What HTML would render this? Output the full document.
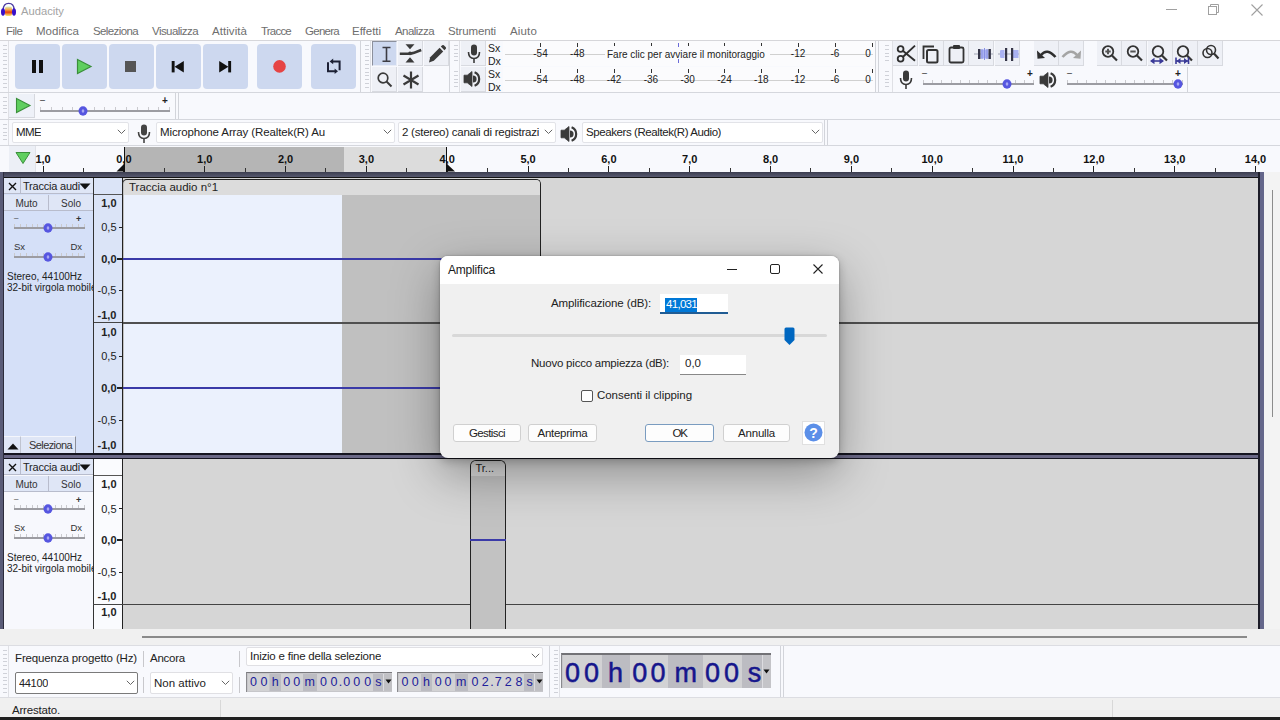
<!DOCTYPE html><html><head><meta charset="utf-8"><style>
html,body{margin:0;padding:0;width:1280px;height:720px;overflow:hidden;background:#fff}
body div{position:absolute}
.t{font-family:"Liberation Sans",sans-serif;white-space:nowrap;line-height:normal}
</style></head><body>
<div style="left:0px;top:0px;width:1280px;height:20px;background:#fff"></div>
<svg style="position:absolute;left:0px;top:0px;" width="18" height="18" viewBox="0 0 18 18"><defs><linearGradient id="ag" x1="0" y1="0" x2="0" y2="1"><stop offset="0" stop-color="#d8f0c0"></stop><stop offset="0.35" stop-color="#f8a040"></stop><stop offset="0.6" stop-color="#e84010"></stop><stop offset="1" stop-color="#f8f070"></stop></linearGradient></defs>
<path d="M3.3 9.5 Q3.3 3.3 8.7 3.3 Q14 3.3 14 9.5" fill="none" stroke="#4a3aa0" stroke-width="1.3"></path>
<rect x="5" y="6.5" width="7" height="9.5" rx="2" fill="url(#ag)"></rect>
<ellipse cx="3" cy="12" rx="2" ry="3.7" fill="#3810c8"></ellipse><ellipse cx="14" cy="12" rx="2" ry="3.7" fill="#3810c8"></ellipse></svg>
<div class="t" style="left:21px;top:5px;font-size:11.2px;color:#a3a3a3;font-weight:400;">Audacity</div>
<div style="left:1166px;top:9px;width:11px;height:1px;background:#a0a0a0"></div>
<svg style="position:absolute;left:1208px;top:4px;" width="12" height="12" viewBox="0 0 12 12"><rect x="0.5" y="2.5" width="8" height="8" fill="none" stroke="#a0a0a0"></rect><path d="M2.5 2.5 V0.5 H10.5 V8.5 H8.5" fill="none" stroke="#a0a0a0"></path></svg>
<svg style="position:absolute;left:1251px;top:4px;" width="12" height="12" viewBox="0 0 12 12"><path d="M0.5 0.5 L11.5 11.5 M11.5 0.5 L0.5 11.5" stroke="#a0a0a0" stroke-width="1.1"></path></svg>
<div style="left:0px;top:20px;width:1280px;height:20px;background:#fff"></div>
<div class="t" style="left: 6px; top: 24.5px; font-size: 11.5px; color: rgb(110, 110, 110); letter-spacing: -0.51px;">File</div>
<div class="t" style="left: 36px; top: 24.5px; font-size: 11.5px; color: rgb(110, 110, 110); letter-spacing: 0.02px;">Modifica</div>
<div class="t" style="left: 93px; top: 24.5px; font-size: 11.5px; color: rgb(110, 110, 110); letter-spacing: -0.61px;">Seleziona</div>
<div class="t" style="left: 152px; top: 24.5px; font-size: 11.5px; color: rgb(110, 110, 110); letter-spacing: -0.56px;">Visualizza</div>
<div class="t" style="left: 212px; top: 24.5px; font-size: 11.5px; color: rgb(110, 110, 110); letter-spacing: 0.06px;">Attività</div>
<div class="t" style="left: 261px; top: 24.5px; font-size: 11.5px; color: rgb(110, 110, 110); letter-spacing: -0.79px;">Tracce</div>
<div class="t" style="left: 305px; top: 24.5px; font-size: 11.5px; color: rgb(110, 110, 110); letter-spacing: -0.73px;">Genera</div>
<div class="t" style="left: 352px; top: 24.5px; font-size: 11.5px; color: rgb(110, 110, 110); letter-spacing: -0.03px;">Effetti</div>
<div class="t" style="left: 395px; top: 24.5px; font-size: 11.5px; color: rgb(110, 110, 110); letter-spacing: -0.56px;">Analizza</div>
<div class="t" style="left: 448px; top: 24.5px; font-size: 11.5px; color: rgb(110, 110, 110); letter-spacing: -0.14px;">Strumenti</div>
<div class="t" style="left: 510px; top: 24.5px; font-size: 11.5px; color: rgb(110, 110, 110); letter-spacing: 0.16px;">Aiuto</div>
<div style="left:0px;top:40px;width:1280px;height:1px;background:#d6d6da"></div>
<div style="left:0px;top:41px;width:1280px;height:105px;background:#f8f9fd"></div>
<div style="left:0px;top:92px;width:1280px;height:1px;background:#d5d7dd"></div>
<div style="left:0px;top:119px;width:1280px;height:1px;background:#d5d7dd"></div>
<div style="left:0px;top:145px;width:1280px;height:1px;background:#d5d7dd"></div>
<div style="left:3px;top:45.0px;width:4px;height:1px;background:#cfd1d8"></div>
<div style="left:3px;top:48.8px;width:4px;height:1px;background:#cfd1d8"></div>
<div style="left:3px;top:52.6px;width:4px;height:1px;background:#cfd1d8"></div>
<div style="left:3px;top:56.4px;width:4px;height:1px;background:#cfd1d8"></div>
<div style="left:3px;top:60.2px;width:4px;height:1px;background:#cfd1d8"></div>
<div style="left:3px;top:64.0px;width:4px;height:1px;background:#cfd1d8"></div>
<div style="left:3px;top:67.8px;width:4px;height:1px;background:#cfd1d8"></div>
<div style="left:3px;top:71.6px;width:4px;height:1px;background:#cfd1d8"></div>
<div style="left:3px;top:75.4px;width:4px;height:1px;background:#cfd1d8"></div>
<div style="left:3px;top:79.2px;width:4px;height:1px;background:#cfd1d8"></div>
<div style="left:3px;top:83.0px;width:4px;height:1px;background:#cfd1d8"></div>
<div style="left:3px;top:86.8px;width:4px;height:1px;background:#cfd1d8"></div>
<div style="left:8px;top:41px;width:1px;height:51px;background:#dfe0e5"></div>
<div style="left:15px;top:44px;width:45px;height:45px;background:#cdd8ef;border-radius:4px"></div>
<div style="left:62px;top:44px;width:45px;height:45px;background:#cdd8ef;border-radius:4px"></div>
<div style="left:109px;top:44px;width:45px;height:45px;background:#cdd8ef;border-radius:4px"></div>
<div style="left:156px;top:44px;width:45px;height:45px;background:#cdd8ef;border-radius:4px"></div>
<div style="left:203px;top:44px;width:45px;height:45px;background:#cdd8ef;border-radius:4px"></div>
<div style="left:257px;top:44px;width:45px;height:45px;background:#cdd8ef;border-radius:4px"></div>
<div style="left:311px;top:44px;width:45px;height:45px;background:#cdd8ef;border-radius:4px"></div>
<div style="left:32px;top:60px;width:3.5px;height:13px;background:#111"></div>
<div style="left:39px;top:60px;width:4px;height:13px;background:#111"></div>
<svg style="position:absolute;left:76px;top:58px;" width="17" height="17" viewBox="0 0 17 17"><path d="M1.5 1.5 L15 8.5 L1.5 15.5 Z" fill="#5fcf5f" stroke="#3a8f3a" stroke-width="1.2"></path></svg>
<div style="left:125px;top:61px;width:11px;height:11px;background:#555"></div>
<svg style="position:absolute;left:171px;top:60px;" width="14" height="14" viewBox="0 0 14 14"><rect x="0.7" y="1" width="2.9" height="11.4" fill="#111"></rect><path d="M12.8 1 L3.6 6.7 L12.8 12.4 Z" fill="#111"></path></svg>
<svg style="position:absolute;left:218px;top:60px;" width="14" height="14" viewBox="0 0 14 14"><rect x="10.2" y="1" width="2.9" height="11.4" fill="#111"></rect><path d="M1.2 1 L10.4 6.7 L1.2 12.4 Z" fill="#111"></path></svg>
<svg style="position:absolute;left:272px;top:59px;" width="15" height="15" viewBox="0 0 15 15"><circle cx="7.5" cy="7.4" r="6.3" fill="#e64444"></circle></svg>
<svg style="position:absolute;left:326px;top:57px;" width="16" height="18" viewBox="0 0 16 18"><path d="M6 4.4 H13.6 V13.3" stroke="#1c2034" stroke-width="2" fill="none"></path><path d="M3.6 4.4 L7.2 1.6 V7.2 Z" fill="#1c2034"></path><path d="M2 5.2 V14.2 H9.5" stroke="#1c2034" stroke-width="2" fill="none"></path><path d="M12 14.2 L8.6 11.4 V17 Z" fill="#1c2034"></path></svg>
<div style="left:360px;top:41px;width:1px;height:51px;background:#d2d4da"></div>
<div style="left:365px;top:45.0px;width:4px;height:1px;background:#cfd1d8"></div>
<div style="left:365px;top:48.8px;width:4px;height:1px;background:#cfd1d8"></div>
<div style="left:365px;top:52.6px;width:4px;height:1px;background:#cfd1d8"></div>
<div style="left:365px;top:56.4px;width:4px;height:1px;background:#cfd1d8"></div>
<div style="left:365px;top:60.2px;width:4px;height:1px;background:#cfd1d8"></div>
<div style="left:365px;top:64.0px;width:4px;height:1px;background:#cfd1d8"></div>
<div style="left:365px;top:67.8px;width:4px;height:1px;background:#cfd1d8"></div>
<div style="left:365px;top:71.6px;width:4px;height:1px;background:#cfd1d8"></div>
<div style="left:365px;top:75.4px;width:4px;height:1px;background:#cfd1d8"></div>
<div style="left:365px;top:79.2px;width:4px;height:1px;background:#cfd1d8"></div>
<div style="left:365px;top:83.0px;width:4px;height:1px;background:#cfd1d8"></div>
<div style="left:365px;top:86.8px;width:4px;height:1px;background:#cfd1d8"></div>
<div style="left:370px;top:41px;width:1px;height:51px;background:#dfe0e5"></div>
<div style="left:372px;top:41px;width:25px;height:25px;background:#eef0f6;border-right:1px solid #d8dae0;border-bottom:1px solid #d8dae0;box-sizing:border-box"></div>
<div style="left:398px;top:41px;width:25px;height:25px;background:#eef0f6;border-right:1px solid #d8dae0;border-bottom:1px solid #d8dae0;box-sizing:border-box"></div>
<div style="left:424px;top:41px;width:25px;height:25px;background:#eef0f6;border-right:1px solid #d8dae0;border-bottom:1px solid #d8dae0;box-sizing:border-box"></div>
<div style="left:372px;top:67px;width:25px;height:25px;background:#eef0f6;border-right:1px solid #d8dae0;border-bottom:1px solid #d8dae0;box-sizing:border-box"></div>
<div style="left:398px;top:67px;width:25px;height:25px;background:#eef0f6;border-right:1px solid #d8dae0;border-bottom:1px solid #d8dae0;box-sizing:border-box"></div>
<div style="left:372px;top:41px;width:25px;height:25px;background:#cdd8ef;border-left:1px solid #8c909c;border-top:1px solid #8c909c;border-right:1px solid #e8ecf6;border-bottom:1px solid #e8ecf6;box-sizing:border-box"></div>
<svg style="position:absolute;left:381px;top:46px;" width="11" height="17" viewBox="0 0 11 17"><path d="M1.5 1.5 H9.5 M1.5 15.2 H9.5 M5.5 1.5 V15.2" stroke="#3c3c44" stroke-width="1.6" fill="none"></path></svg>
<svg style="position:absolute;left:399px;top:43px;" width="23" height="21" viewBox="0 0 23 21"><path d="M6.5 1.2 H15.5 L11 6.2 Z" fill="#3a3a3a"></path><path d="M6.5 19.5 H15.5 L11 14.2 Z" fill="#3a3a3a"></path><path d="M0.8 10.8 H10.5 Q14 10.5 22.2 7" stroke="#3a3a3a" stroke-width="2.6" fill="none"></path><circle cx="11" cy="10.4" r="1.8" fill="#3a3a3a"></circle></svg>
<svg style="position:absolute;left:427px;top:44px;" width="20" height="20" viewBox="0 0 20 20"><path d="M2 18.5 L3.2 13.2 L12.6 3.8 L16.2 7.4 L6.8 16.8 Z" fill="#3a3a3a"></path><path d="M13.8 2.6 L15.2 1.2 Q16 0.6 16.8 1.2 L18.8 3.2 Q19.4 4 18.8 4.8 L17.4 6.2 Z" fill="#3a3a3a"></path></svg>
<svg style="position:absolute;left:376px;top:71px;" width="18" height="18" viewBox="0 0 18 18"><circle cx="7" cy="7" r="4.8" stroke="#3a3a3a" stroke-width="1.7" fill="none"></circle><path d="M10.5 10.5 L15.5 15.5" stroke="#3a3a3a" stroke-width="2"></path></svg>
<svg style="position:absolute;left:401px;top:70px;" width="20" height="20" viewBox="0 0 20 20"><path d="M10 1.5 V18.5 M2.5 5.5 L17.5 14.5 M2.5 14.5 L17.5 5.5" stroke="#3a3a3a" stroke-width="2.2"></path></svg>
<div style="left:449px;top:41px;width:1px;height:51px;background:#d2d4da"></div>
<div style="left:454px;top:45.0px;width:4px;height:1px;background:#cfd1d8"></div>
<div style="left:454px;top:48.8px;width:4px;height:1px;background:#cfd1d8"></div>
<div style="left:454px;top:52.6px;width:4px;height:1px;background:#cfd1d8"></div>
<div style="left:454px;top:56.4px;width:4px;height:1px;background:#cfd1d8"></div>
<div style="left:454px;top:60.2px;width:4px;height:1px;background:#cfd1d8"></div>
<div style="left:454px;top:71.0px;width:4px;height:1px;background:#cfd1d8"></div>
<div style="left:454px;top:74.8px;width:4px;height:1px;background:#cfd1d8"></div>
<div style="left:454px;top:78.6px;width:4px;height:1px;background:#cfd1d8"></div>
<div style="left:454px;top:82.4px;width:4px;height:1px;background:#cfd1d8"></div>
<div style="left:454px;top:86.2px;width:4px;height:1px;background:#cfd1d8"></div>
<div style="left:459px;top:41px;width:1px;height:51px;background:#dfe0e5"></div>
<div style="left:461px;top:41px;width:25px;height:25px;background:#eef0f6;border-right:1px solid #d8dae0;border-bottom:1px solid #d8dae0;box-sizing:border-box"></div>
<div style="left:461px;top:67px;width:25px;height:25px;background:#eef0f6;border-right:1px solid #d8dae0;border-bottom:1px solid #d8dae0;box-sizing:border-box"></div>
<svg style="position:absolute;left:467px;top:44px;" width="14" height="20" viewBox="0 0 14 20"><rect x="4" y="0.5" width="6" height="11" rx="3" fill="#3a3a3a"></rect><path d="M1.5 8 Q1.5 14.5 7 14.5 Q12.5 14.5 12.5 8" stroke="#3a3a3a" stroke-width="1.6" fill="none"></path><path d="M7 14.5 V19" stroke="#3a3a3a" stroke-width="1.6"></path></svg>
<svg style="position:absolute;left:463px;top:70px;" width="20" height="18" viewBox="0 0 20 18"><path d="M1 5.2 H4.3 L9 1.5 V16.5 L4.3 12.8 H1 Z" fill="#3a3a3a" stroke="#3a3a3a" stroke-width="0.8" stroke-linejoin="round"></path><path d="M10 5.4 A3.6 3.6 0 0 1 10 12.6 Z" fill="#3a3a3a"></path><path d="M11.6 2.3 A7.2 7.2 0 0 1 11.6 15.7" stroke="#3a3a3a" stroke-width="2.2" fill="none"></path></svg>
<div class="t" style="left:488px;top:42px;font-size:10.5px;color:#222;font-weight:400;">Sx</div>
<div class="t" style="left:488px;top:54.5px;font-size:10.5px;color:#222;font-weight:400;">Dx</div>
<div class="t" style="left:488px;top:68px;font-size:10.5px;color:#222;font-weight:400;">Sx</div>
<div class="t" style="left:488px;top:80.5px;font-size:10.5px;color:#222;font-weight:400;">Dx</div>
<div style="left:503px;top:41px;width:372px;height:25px;background:#fbfbfd"></div>
<div style="left:505px;top:54px;width:368px;height:1px;background:#d0d0d0"></div>
<div style="left:540px;top:43px;width:1px;height:4px;background:#333"></div>
<div style="left:577px;top:43px;width:1px;height:4px;background:#333"></div>
<div style="left:614px;top:43px;width:1px;height:4px;background:#333"></div>
<div style="left:651px;top:43px;width:1px;height:4px;background:#333"></div>
<div style="left:688px;top:43px;width:1px;height:4px;background:#333"></div>
<div style="left:724px;top:43px;width:1px;height:4px;background:#333"></div>
<div style="left:761px;top:43px;width:1px;height:4px;background:#333"></div>
<div style="left:798px;top:43px;width:1px;height:4px;background:#333"></div>
<div style="left:835px;top:43px;width:1px;height:4px;background:#333"></div>
<div style="left:872px;top:43px;width:1px;height:4px;background:#333"></div>
<div class="t" style="left:520.5px;top:47.5px;width:40px;text-align:center;font-size:10px;color:#222">-54</div>
<div class="t" style="left:557.3px;top:47.5px;width:40px;text-align:center;font-size:10px;color:#222">-48</div>
<div class="t" style="left:778.0999999999999px;top:47.5px;width:40px;text-align:center;font-size:10px;color:#222">-12</div>
<div class="t" style="left:814.9px;top:47.5px;width:40px;text-align:center;font-size:10px;color:#222">-6</div>
<div class="t" style="left:845.7px;top:47.5px;width:25px;text-align:right;font-size:10px;color:#222">0</div>
<div style="left:503px;top:67px;width:372px;height:25px;background:#fbfbfd"></div>
<div style="left:505px;top:80px;width:368px;height:1px;background:#d0d0d0"></div>
<div style="left:540px;top:69px;width:1px;height:4px;background:#333"></div>
<div style="left:577px;top:69px;width:1px;height:4px;background:#333"></div>
<div style="left:614px;top:69px;width:1px;height:4px;background:#333"></div>
<div style="left:651px;top:69px;width:1px;height:4px;background:#333"></div>
<div style="left:688px;top:69px;width:1px;height:4px;background:#333"></div>
<div style="left:724px;top:69px;width:1px;height:4px;background:#333"></div>
<div style="left:761px;top:69px;width:1px;height:4px;background:#333"></div>
<div style="left:798px;top:69px;width:1px;height:4px;background:#333"></div>
<div style="left:835px;top:69px;width:1px;height:4px;background:#333"></div>
<div style="left:872px;top:69px;width:1px;height:4px;background:#333"></div>
<div class="t" style="left:520.5px;top:73.5px;width:40px;text-align:center;font-size:10px;color:#222">-54</div>
<div class="t" style="left:557.3px;top:73.5px;width:40px;text-align:center;font-size:10px;color:#222">-48</div>
<div class="t" style="left:594.1px;top:73.5px;width:40px;text-align:center;font-size:10px;color:#222">-42</div>
<div class="t" style="left:630.9px;top:73.5px;width:40px;text-align:center;font-size:10px;color:#222">-36</div>
<div class="t" style="left:667.7px;top:73.5px;width:40px;text-align:center;font-size:10px;color:#222">-30</div>
<div class="t" style="left:704.5px;top:73.5px;width:40px;text-align:center;font-size:10px;color:#222">-24</div>
<div class="t" style="left:741.3px;top:73.5px;width:40px;text-align:center;font-size:10px;color:#222">-18</div>
<div class="t" style="left:778.0999999999999px;top:73.5px;width:40px;text-align:center;font-size:10px;color:#222">-12</div>
<div class="t" style="left:814.9px;top:73.5px;width:40px;text-align:center;font-size:10px;color:#222">-6</div>
<div class="t" style="left:845.7px;top:73.5px;width:25px;text-align:right;font-size:10px;color:#222">0</div>
<div style="left:605px;top:46px;width:165px;height:16px;background:#fbfbfd"></div>
<div class="t" style="left:607px;top:49px;font-size:10px;color:#222;font-weight:400;">Fare clic per avviare il monitoraggio</div>
<div style="left:678px;top:43px;width:1px;height:4px;background:#6a6ad8"></div>
<div style="left:678px;top:59px;width:1px;height:4px;background:#6a6ad8"></div>
<div style="left:875px;top:41px;width:1px;height:51px;background:#d2d4da"></div>
<div style="left:878px;top:41px;width:1px;height:51px;background:#d2d4da"></div>
<div style="left:885px;top:45.0px;width:4px;height:1px;background:#cfd1d8"></div>
<div style="left:885px;top:48.8px;width:4px;height:1px;background:#cfd1d8"></div>
<div style="left:885px;top:52.6px;width:4px;height:1px;background:#cfd1d8"></div>
<div style="left:885px;top:56.4px;width:4px;height:1px;background:#cfd1d8"></div>
<div style="left:885px;top:60.2px;width:4px;height:1px;background:#cfd1d8"></div>
<div style="left:885px;top:71.0px;width:4px;height:1px;background:#cfd1d8"></div>
<div style="left:885px;top:74.8px;width:4px;height:1px;background:#cfd1d8"></div>
<div style="left:885px;top:78.6px;width:4px;height:1px;background:#cfd1d8"></div>
<div style="left:885px;top:82.4px;width:4px;height:1px;background:#cfd1d8"></div>
<div style="left:885px;top:86.2px;width:4px;height:1px;background:#cfd1d8"></div>
<div style="left:892px;top:41px;width:1px;height:51px;background:#dfe0e5"></div>
<div style="left:893px;top:41px;width:25px;height:25px;background:#eef0f6;border-right:1px solid #d8dae0;border-bottom:1px solid #d8dae0;box-sizing:border-box"></div>
<div style="left:919px;top:41px;width:25px;height:25px;background:#eef0f6;border-right:1px solid #d8dae0;border-bottom:1px solid #d8dae0;box-sizing:border-box"></div>
<div style="left:944px;top:41px;width:25px;height:25px;background:#eef0f6;border-right:1px solid #d8dae0;border-bottom:1px solid #d8dae0;box-sizing:border-box"></div>
<div style="left:969px;top:41px;width:25px;height:25px;background:#eef0f6;border-right:1px solid #d8dae0;border-bottom:1px solid #d8dae0;box-sizing:border-box"></div>
<div style="left:995px;top:41px;width:25px;height:25px;background:#eef0f6;border-right:1px solid #d8dae0;border-bottom:1px solid #d8dae0;box-sizing:border-box"></div>
<div style="left:1034px;top:41px;width:25px;height:25px;background:#eef0f6;border-right:1px solid #d8dae0;border-bottom:1px solid #d8dae0;box-sizing:border-box"></div>
<div style="left:1059px;top:41px;width:25px;height:25px;background:#eef0f6;border-right:1px solid #d8dae0;border-bottom:1px solid #d8dae0;box-sizing:border-box"></div>
<div style="left:1097px;top:41px;width:25px;height:25px;background:#eef0f6;border-right:1px solid #d8dae0;border-bottom:1px solid #d8dae0;box-sizing:border-box"></div>
<div style="left:1122px;top:41px;width:25px;height:25px;background:#eef0f6;border-right:1px solid #d8dae0;border-bottom:1px solid #d8dae0;box-sizing:border-box"></div>
<div style="left:1148px;top:41px;width:25px;height:25px;background:#eef0f6;border-right:1px solid #d8dae0;border-bottom:1px solid #d8dae0;box-sizing:border-box"></div>
<div style="left:1173px;top:41px;width:25px;height:25px;background:#eef0f6;border-right:1px solid #d8dae0;border-bottom:1px solid #d8dae0;box-sizing:border-box"></div>
<div style="left:1198px;top:41px;width:25px;height:25px;background:#eef0f6;border-right:1px solid #d8dae0;border-bottom:1px solid #d8dae0;box-sizing:border-box"></div>
<svg style="position:absolute;left:895px;top:42px;" width="22" height="22" viewBox="0 0 22 22"><circle cx="5.6" cy="7" r="2.9" stroke="#2e2e2e" stroke-width="1.8" fill="none"></circle><circle cx="5.6" cy="16.8" r="2.9" stroke="#2e2e2e" stroke-width="1.8" fill="none"></circle><path d="M7.8 8.8 L20 18.8 M7.8 15 L20 3.6" stroke="#2e2e2e" stroke-width="1.9"></path></svg>
<svg style="position:absolute;left:921px;top:44px;" width="20" height="20" viewBox="0 0 20 20"><path d="M2.5 15 V2.5 H13" stroke="#333" stroke-width="1.8" fill="none"></path><rect x="6" y="6" width="10.5" height="12.5" rx="1.5" stroke="#333" stroke-width="2" fill="none"></rect></svg>
<svg style="position:absolute;left:948px;top:44px;" width="17" height="20" viewBox="0 0 17 20"><rect x="1.5" y="3.5" width="14" height="15" rx="1.5" stroke="#333" stroke-width="1.8" fill="none"></rect><rect x="5" y="1" width="7" height="4" rx="1" fill="#333"></rect></svg>
<svg style="position:absolute;left:971px;top:44px;" width="24" height="20" viewBox="0 0 24 20"><path d="M3 10 H22" stroke="#a0a4b4" stroke-width="1"></path><rect x="9.5" y="5.5" width="8" height="9" fill="#aab2f2"></rect><path d="M11 5 V15 M13.5 4 V16 M16 5 V15" stroke="#8890e4" stroke-width="1"></path><rect x="7" y="5" width="2.4" height="10" fill="#353548"></rect><rect x="17.5" y="5" width="2.4" height="10" fill="#353548"></rect></svg>
<svg style="position:absolute;left:996px;top:44px;" width="24" height="20" viewBox="0 0 24 20"><path d="M2 10 H23" stroke="#a0a4b4" stroke-width="1"></path><path d="M4 6 Q8 10 4 14 Z" fill="#aab2f2"></path><rect x="4.5" y="6" width="4" height="8" fill="#aab2f2"></rect><rect x="17" y="6" width="5.5" height="8" fill="#aab2f2"></rect><rect x="9" y="4" width="2.2" height="13" fill="#353548"></rect><rect x="15" y="4" width="2.2" height="13" fill="#353548"></rect></svg>
<svg style="position:absolute;left:1036px;top:47px;" width="22" height="14" viewBox="0 0 22 14"><path d="M5 8 Q11 0.5 19.5 10" stroke="#2e2e2e" stroke-width="2.6" fill="none"></path><path d="M1 3.5 L1.5 11.8 L9 11 Z" fill="#2e2e2e"></path></svg>
<svg style="position:absolute;left:1060px;top:47px;" width="22" height="14" viewBox="0 0 22 14"><path d="M17 8 Q11 0.5 2.5 10" stroke="#a4a4a4" stroke-width="2.6" fill="none"></path><path d="M21 3.5 L20.5 11.8 L13 11 Z" fill="#a4a4a4"></path></svg>
<svg style="position:absolute;left:1100px;top:44px;" width="20" height="20" viewBox="0 0 20 20"><circle cx="8" cy="7.5" r="5.3" stroke="#333" stroke-width="1.8" fill="none"></circle><path d="M12 11.5 L17 16.5" stroke="#333" stroke-width="2.2"></path><path d="M5.3 7.5 H10.7 M8 4.8 V10.2" stroke="#555" stroke-width="2"></path></svg>
<svg style="position:absolute;left:1125px;top:44px;" width="20" height="20" viewBox="0 0 20 20"><circle cx="8" cy="7.5" r="5.3" stroke="#333" stroke-width="1.8" fill="none"></circle><path d="M12 11.5 L17 16.5" stroke="#333" stroke-width="2.2"></path><path d="M5.3 7.5 H10.7" stroke="#555" stroke-width="2"></path></svg>
<svg style="position:absolute;left:1150px;top:44px;" width="20" height="20" viewBox="0 0 20 20"><circle cx="8" cy="7.5" r="5.3" stroke="#333" stroke-width="1.8" fill="none"></circle><path d="M12 11.5 L17 16.5" stroke="#333" stroke-width="2.2"></path><path d="M1.5 17 H12.5" stroke="#3a3a98" stroke-width="1.6"></path><path d="M0 17 L4.5 13.8 V20.2 Z M14 17 L9.5 13.8 V20.2 Z" fill="#3a3a98"></path></svg>
<svg style="position:absolute;left:1175px;top:44px;" width="20" height="20" viewBox="0 0 20 20"><circle cx="8" cy="7.5" r="5.3" stroke="#333" stroke-width="1.8" fill="none"></circle><path d="M12 11.5 L17 16.5" stroke="#333" stroke-width="2.2"></path><path d="M1 17 H13 M1 13.5 V20.5 M13.5 13.5 V20.5" stroke="#3a3a98" stroke-width="1.6"></path><path d="M1.5 17 L5.5 14 V20 Z M13 17 L9 14 V20 Z" fill="#3a3a98"></path></svg>
<svg style="position:absolute;left:1201px;top:44px;" width="20" height="20" viewBox="0 0 20 20"><circle cx="6.5" cy="9" r="4.5" stroke="#333" stroke-width="1.6" fill="none"></circle><circle cx="10" cy="6" r="4.5" stroke="#333" stroke-width="1.6" fill="none"></circle><path d="M13 9.5 L17.5 14.5" stroke="#333" stroke-width="2.2"></path></svg>
<svg style="position:absolute;left:899px;top:70px;" width="14" height="20" viewBox="0 0 14 20"><rect x="4" y="0.5" width="6" height="11" rx="3" fill="#3a3a3a"></rect><path d="M1.5 8 Q1.5 14.5 7 14.5 Q12.5 14.5 12.5 8" stroke="#3a3a3a" stroke-width="1.6" fill="none"></path><path d="M7 14.5 V19" stroke="#3a3a3a" stroke-width="1.6"></path></svg>
<div style="left:923px;top:83px;width:111px;height:1.5px;background:#9c9ca2"></div>
<div style="left:923px;top:80px;width:1px;height:3px;background:#cacace"></div>
<div style="left:932px;top:80px;width:1px;height:3px;background:#cacace"></div>
<div style="left:941px;top:80px;width:1px;height:3px;background:#cacace"></div>
<div style="left:951px;top:80px;width:1px;height:3px;background:#cacace"></div>
<div style="left:960px;top:80px;width:1px;height:3px;background:#cacace"></div>
<div style="left:969px;top:80px;width:1px;height:3px;background:#cacace"></div>
<div style="left:978px;top:80px;width:1px;height:3px;background:#cacace"></div>
<div style="left:987px;top:80px;width:1px;height:3px;background:#cacace"></div>
<div style="left:996px;top:80px;width:1px;height:3px;background:#cacace"></div>
<div style="left:1005px;top:80px;width:1px;height:3px;background:#cacace"></div>
<div style="left:1015px;top:80px;width:1px;height:3px;background:#cacace"></div>
<div style="left:1024px;top:80px;width:1px;height:3px;background:#cacace"></div>
<div style="left:1033px;top:80px;width:1px;height:3px;background:#cacace"></div>
<svg style="position:absolute;left:1002px;top:78.75px;" width="10" height="10" viewBox="0 0 10 10"><ellipse cx="5" cy="5" rx="4.5" ry="4.7" fill="#5656e0"></ellipse><ellipse cx="5" cy="5" rx="1.3" ry="1.8" fill="#a8a8f4"></ellipse></svg>
<div class="t" style="left:922px;top:68px;font-size:9px;color:#222;font-weight:400;">–</div>
<div class="t" style="left:1027px;top:68px;font-size:10px;color:#222;font-weight:700;">+</div>
<svg style="position:absolute;left:1039px;top:71px;" width="20" height="18" viewBox="0 0 20 18"><path d="M1 5.2 H4.3 L9 1.5 V16.5 L4.3 12.8 H1 Z" fill="#3a3a3a" stroke="#3a3a3a" stroke-width="0.8" stroke-linejoin="round"></path><path d="M10 5.4 A3.6 3.6 0 0 1 10 12.6 Z" fill="#3a3a3a"></path><path d="M11.6 2.3 A7.2 7.2 0 0 1 11.6 15.7" stroke="#3a3a3a" stroke-width="2.2" fill="none"></path></svg>
<div style="left:1067px;top:83px;width:116px;height:1.5px;background:#9c9ca2"></div>
<div style="left:1067px;top:80px;width:1px;height:3px;background:#cacace"></div>
<div style="left:1077px;top:80px;width:1px;height:3px;background:#cacace"></div>
<div style="left:1086px;top:80px;width:1px;height:3px;background:#cacace"></div>
<div style="left:1096px;top:80px;width:1px;height:3px;background:#cacace"></div>
<div style="left:1105px;top:80px;width:1px;height:3px;background:#cacace"></div>
<div style="left:1115px;top:80px;width:1px;height:3px;background:#cacace"></div>
<div style="left:1125px;top:80px;width:1px;height:3px;background:#cacace"></div>
<div style="left:1134px;top:80px;width:1px;height:3px;background:#cacace"></div>
<div style="left:1144px;top:80px;width:1px;height:3px;background:#cacace"></div>
<div style="left:1153px;top:80px;width:1px;height:3px;background:#cacace"></div>
<div style="left:1163px;top:80px;width:1px;height:3px;background:#cacace"></div>
<div style="left:1172px;top:80px;width:1px;height:3px;background:#cacace"></div>
<div style="left:1182px;top:80px;width:1px;height:3px;background:#cacace"></div>
<svg style="position:absolute;left:1173px;top:78.75px;" width="10" height="10" viewBox="0 0 10 10"><ellipse cx="5" cy="5" rx="4.5" ry="4.7" fill="#5656e0"></ellipse><ellipse cx="5" cy="5" rx="1.3" ry="1.8" fill="#a8a8f4"></ellipse></svg>
<div class="t" style="left:1067px;top:68px;font-size:9px;color:#222;font-weight:400;">–</div>
<div class="t" style="left:1175px;top:68px;font-size:10px;color:#222;font-weight:700;">+</div>
<div style="left:1187px;top:67px;width:1px;height:25px;background:#d2d4da"></div>
<div style="left:3px;top:97.0px;width:4px;height:1px;background:#cfd1d8"></div>
<div style="left:3px;top:100.8px;width:4px;height:1px;background:#cfd1d8"></div>
<div style="left:3px;top:104.6px;width:4px;height:1px;background:#cfd1d8"></div>
<div style="left:3px;top:108.4px;width:4px;height:1px;background:#cfd1d8"></div>
<div style="left:3px;top:112.2px;width:4px;height:1px;background:#cfd1d8"></div>
<div style="left:8px;top:93px;width:1px;height:26px;background:#dfe0e5"></div>
<div style="left:9px;top:94px;width:26px;height:24px;background:#eef1f8;border-right:1px solid #d6d8de;border-bottom:1px solid #d6d8de;box-sizing:border-box"></div>
<svg style="position:absolute;left:15px;top:97px;" width="17" height="17" viewBox="0 0 17 17"><path d="M1.5 1.5 L15 8.5 L1.5 15.5 Z" fill="#5fcf5f" stroke="#3a8f3a" stroke-width="1.1"></path></svg>
<div class="t" style="left:40px;top:95px;font-size:9px;color:#222;font-weight:400;">–</div>
<div class="t" style="left:162px;top:95px;font-size:10px;color:#222;font-weight:700;">+</div>
<div style="left:40px;top:110px;width:130px;height:1.5px;background:#9c9ca2"></div>
<div style="left:40px;top:107px;width:1px;height:3px;background:#cacace"></div>
<div style="left:51px;top:107px;width:1px;height:3px;background:#cacace"></div>
<div style="left:62px;top:107px;width:1px;height:3px;background:#cacace"></div>
<div style="left:72px;top:107px;width:1px;height:3px;background:#cacace"></div>
<div style="left:83px;top:107px;width:1px;height:3px;background:#cacace"></div>
<div style="left:94px;top:107px;width:1px;height:3px;background:#cacace"></div>
<div style="left:104px;top:107px;width:1px;height:3px;background:#cacace"></div>
<div style="left:115px;top:107px;width:1px;height:3px;background:#cacace"></div>
<div style="left:126px;top:107px;width:1px;height:3px;background:#cacace"></div>
<div style="left:137px;top:107px;width:1px;height:3px;background:#cacace"></div>
<div style="left:148px;top:107px;width:1px;height:3px;background:#cacace"></div>
<div style="left:158px;top:107px;width:1px;height:3px;background:#cacace"></div>
<div style="left:169px;top:107px;width:1px;height:3px;background:#cacace"></div>
<svg style="position:absolute;left:78px;top:105.75px;" width="10" height="10" viewBox="0 0 10 10"><ellipse cx="5" cy="5" rx="4.5" ry="4.7" fill="#5656e0"></ellipse><ellipse cx="5" cy="5" rx="1.3" ry="1.8" fill="#a8a8f4"></ellipse></svg>
<div style="left:175px;top:93px;width:1px;height:26px;background:#d2d4da"></div>
<div style="left:178px;top:93px;width:1px;height:26px;background:#d2d4da"></div>
<div style="left:3px;top:124.0px;width:4px;height:1px;background:#cfd1d8"></div>
<div style="left:3px;top:127.8px;width:4px;height:1px;background:#cfd1d8"></div>
<div style="left:3px;top:131.6px;width:4px;height:1px;background:#cfd1d8"></div>
<div style="left:3px;top:135.4px;width:4px;height:1px;background:#cfd1d8"></div>
<div style="left:3px;top:139.2px;width:4px;height:1px;background:#cfd1d8"></div>
<div style="left:8px;top:120px;width:1px;height:25px;background:#dfe0e5"></div>
<div style="left:12px;top:122px;width:117px;height:21px;background:#fff;border:1px solid #e2e3e8;box-sizing:border-box;border-radius:2px"></div>
<div class="t" style="left: 16px; top: 126.3px; font-size: 11.5px; color: rgb(34, 34, 34); white-space: nowrap; overflow: hidden; letter-spacing: -0.61px;">MME</div>
<svg style="position:absolute;left:117px;top:129px;" width="9" height="6" viewBox="0 0 9 6"><path d="M0.8 0.8 L4.5 4.5 L8.2 0.8" stroke="#666" stroke-width="1" fill="none"></path></svg>
<svg style="position:absolute;left:137px;top:124px;" width="14" height="20" viewBox="0 0 14 20"><rect x="4" y="0.5" width="6" height="11" rx="3" fill="#444"></rect><path d="M1.5 8 Q1.5 14.5 7 14.5 Q12.5 14.5 12.5 8" stroke="#444" stroke-width="1.6" fill="none"></path><path d="M7 14.5 V19" stroke="#444" stroke-width="1.6"></path></svg>
<div style="left:156px;top:122px;width:239px;height:21px;background:#fff;border:1px solid #e2e3e8;box-sizing:border-box;border-radius:2px"></div>
<div class="t" style="left: 160px; top: 126.3px; font-size: 11.5px; color: rgb(34, 34, 34); white-space: nowrap; overflow: hidden; letter-spacing: -0.12px;">Microphone Array (Realtek(R) Au</div>
<svg style="position:absolute;left:383px;top:129px;" width="9" height="6" viewBox="0 0 9 6"><path d="M0.8 0.8 L4.5 4.5 L8.2 0.8" stroke="#666" stroke-width="1" fill="none"></path></svg>
<div style="left:398px;top:122px;width:158px;height:21px;background:#fff;border:1px solid #e2e3e8;box-sizing:border-box;border-radius:2px"></div>
<div class="t" style="left: 402px; top: 126.3px; font-size: 11.5px; color: rgb(34, 34, 34); white-space: nowrap; overflow: hidden; letter-spacing: -0.24px;">2 (stereo) canali di registrazi</div>
<svg style="position:absolute;left:544px;top:129px;" width="9" height="6" viewBox="0 0 9 6"><path d="M0.8 0.8 L4.5 4.5 L8.2 0.8" stroke="#666" stroke-width="1" fill="none"></path></svg>
<svg style="position:absolute;left:560px;top:125px;" width="20" height="18" viewBox="0 0 20 18"><path d="M1 5.2 H4.3 L9 1.5 V16.5 L4.3 12.8 H1 Z" fill="#3a3a3a" stroke="#3a3a3a" stroke-width="0.8" stroke-linejoin="round"></path><path d="M10 5.4 A3.6 3.6 0 0 1 10 12.6 Z" fill="#3a3a3a"></path><path d="M11.6 2.3 A7.2 7.2 0 0 1 11.6 15.7" stroke="#3a3a3a" stroke-width="2.2" fill="none"></path></svg>
<div style="left:582px;top:122px;width:241px;height:21px;background:#fff;border:1px solid #e2e3e8;box-sizing:border-box;border-radius:2px"></div>
<div class="t" style="left: 586px; top: 126.3px; font-size: 11.5px; color: rgb(34, 34, 34); white-space: nowrap; overflow: hidden; letter-spacing: -0.42px;">Speakers (Realtek(R) Audio)</div>
<svg style="position:absolute;left:811px;top:129px;" width="9" height="6" viewBox="0 0 9 6"><path d="M0.8 0.8 L4.5 4.5 L8.2 0.8" stroke="#666" stroke-width="1" fill="none"></path></svg>
<div style="left:824px;top:120px;width:1px;height:25px;background:#d2d4da"></div>
<div style="left:827px;top:120px;width:1px;height:25px;background:#d2d4da"></div>
<div style="left:0px;top:146px;width:1280px;height:26px;background:#f8f9fd"></div>
<div style="left:9px;top:146px;width:27px;height:26px;background:#eceff6;border-right:1px solid #e0e2e8;box-sizing:border-box"></div>
<svg style="position:absolute;left:15px;top:151px;" width="16" height="14" viewBox="0 0 16 14"><path d="M1 1.5 H15 L8 12.5 Z" fill="#5fcf5f" stroke="#3a8f3a" stroke-width="1"></path></svg>
<div style="left:124px;top:147px;width:220px;height:25px;background:#b5b5b5"></div>
<div style="left:344px;top:147px;width:102px;height:25px;background:#dcdcdc"></div>
<div class="t" style="left:27.570000000000007px;top:152.6px;width:31px;text-align:center;font-size:11px;font-weight:700;color:#111">1,0</div>
<div style="left:43px;top:166px;width:1px;height:6px;background:#222"></div>
<div style="left:83px;top:168px;width:1px;height:4px;background:#333"></div>
<div class="t" style="left:108.4px;top:152.6px;width:31px;text-align:center;font-size:11px;font-weight:700;color:#111">0,0</div>
<div style="left:123px;top:166px;width:1px;height:6px;background:#222"></div>
<div style="left:164px;top:168px;width:1px;height:4px;background:#333"></div>
<div class="t" style="left:189.23000000000002px;top:152.6px;width:31px;text-align:center;font-size:11px;font-weight:700;color:#111">1,0</div>
<div style="left:204px;top:166px;width:1px;height:6px;background:#222"></div>
<div style="left:245px;top:168px;width:1px;height:4px;background:#333"></div>
<div class="t" style="left:270.06px;top:152.6px;width:31px;text-align:center;font-size:11px;font-weight:700;color:#111">2,0</div>
<div style="left:285px;top:166px;width:1px;height:6px;background:#222"></div>
<div style="left:325px;top:168px;width:1px;height:4px;background:#333"></div>
<div class="t" style="left:350.89px;top:152.6px;width:31px;text-align:center;font-size:11px;font-weight:700;color:#111">3,0</div>
<div style="left:366px;top:166px;width:1px;height:6px;background:#222"></div>
<div style="left:406px;top:168px;width:1px;height:4px;background:#333"></div>
<div class="t" style="left:431.72px;top:152.6px;width:31px;text-align:center;font-size:11px;font-weight:700;color:#111">4,0</div>
<div style="left:447px;top:166px;width:1px;height:6px;background:#222"></div>
<div style="left:487px;top:168px;width:1px;height:4px;background:#333"></div>
<div class="t" style="left:512.55px;top:152.6px;width:31px;text-align:center;font-size:11px;font-weight:700;color:#111">5,0</div>
<div style="left:528px;top:166px;width:1px;height:6px;background:#222"></div>
<div style="left:568px;top:168px;width:1px;height:4px;background:#333"></div>
<div class="t" style="left:593.38px;top:152.6px;width:31px;text-align:center;font-size:11px;font-weight:700;color:#111">6,0</div>
<div style="left:608px;top:166px;width:1px;height:6px;background:#222"></div>
<div style="left:649px;top:168px;width:1px;height:4px;background:#333"></div>
<div class="t" style="left:674.2099999999999px;top:152.6px;width:31px;text-align:center;font-size:11px;font-weight:700;color:#111">7,0</div>
<div style="left:689px;top:166px;width:1px;height:6px;background:#222"></div>
<div style="left:730px;top:168px;width:1px;height:4px;background:#333"></div>
<div class="t" style="left:755.04px;top:152.6px;width:31px;text-align:center;font-size:11px;font-weight:700;color:#111">8,0</div>
<div style="left:770px;top:166px;width:1px;height:6px;background:#222"></div>
<div style="left:810px;top:168px;width:1px;height:4px;background:#333"></div>
<div class="t" style="left:835.87px;top:152.6px;width:31px;text-align:center;font-size:11px;font-weight:700;color:#111">9,0</div>
<div style="left:851px;top:166px;width:1px;height:6px;background:#222"></div>
<div style="left:891px;top:168px;width:1px;height:4px;background:#333"></div>
<div class="t" style="left:916.6999999999999px;top:152.6px;width:31px;text-align:center;font-size:11px;font-weight:700;color:#111">10,0</div>
<div style="left:932px;top:166px;width:1px;height:6px;background:#222"></div>
<div style="left:972px;top:168px;width:1px;height:4px;background:#333"></div>
<div class="t" style="left:997.53px;top:152.6px;width:31px;text-align:center;font-size:11px;font-weight:700;color:#111">11,0</div>
<div style="left:1013px;top:166px;width:1px;height:6px;background:#222"></div>
<div style="left:1053px;top:168px;width:1px;height:4px;background:#333"></div>
<div class="t" style="left:1078.3600000000001px;top:152.6px;width:31px;text-align:center;font-size:11px;font-weight:700;color:#111">12,0</div>
<div style="left:1093px;top:166px;width:1px;height:6px;background:#222"></div>
<div style="left:1134px;top:168px;width:1px;height:4px;background:#333"></div>
<div class="t" style="left:1159.19px;top:152.6px;width:31px;text-align:center;font-size:11px;font-weight:700;color:#111">13,0</div>
<div style="left:1174px;top:166px;width:1px;height:6px;background:#222"></div>
<div style="left:1215px;top:168px;width:1px;height:4px;background:#333"></div>
<div class="t" style="left:1240.02px;top:152.6px;width:31px;text-align:center;font-size:11px;font-weight:700;color:#111">14,0</div>
<div style="left:1255px;top:166px;width:1px;height:6px;background:#222"></div>
<div style="left:124px;top:147px;width:1px;height:25px;background:#111"></div>
<svg style="position:absolute;left:116px;top:163px;" width="9" height="9" viewBox="0 0 9 9"><path d="M8.5 0.5 V8.5 H0.5 Z" fill="#111"></path></svg>
<div style="left:446px;top:147px;width:1px;height:25px;background:#111"></div>
<svg style="position:absolute;left:446px;top:163px;" width="10" height="9" viewBox="0 0 10 9"><path d="M0.5 0.5 L9 8.5 H0.5 Z" fill="#111"></path></svg>
<div style="left:0px;top:172px;width:1280px;height:457px;background:#d6d6d6"></div>
<div style="left:0;top:172px;width:1264px;height:6px;background:linear-gradient(#3c3e50,#5c5e76)"></div>
<div style="left:4px;top:177px;width:1256px;height:1px;background:#151515"></div>
<div style="left:0px;top:172px;width:4px;height:457px;background:#5a5c78;border-right:1px solid #2c2c3c;box-sizing:border-box"></div>
<div style="left:1258px;top:172px;width:6px;height:457px;background:#64668a;border-left:2px solid #1c1c28;box-sizing:border-box"></div>
<div style="left:1264px;top:172px;width:16px;height:457px;background:#f3f3f3"></div>
<div style="left:1271.5px;top:190px;width:1.5px;height:227px;background:#8c8c8c"></div>
<div style="left:4px;top:178px;width:90px;height:275px;background:#d5e0f8"></div>
<div style="left:93px;top:178px;width:1px;height:275px;background:#333"></div>
<div style="left:4px;top:178px;width:17px;height:16px;background:#dfe6f6;border-right:1px solid #b8bccc;border-bottom:1px solid #b8bccc;box-sizing:border-box"></div>
<svg style="position:absolute;left:8px;top:182px;" width="9" height="9" viewBox="0 0 9 9"><path d="M1 1 L8 8 M8 1 L1 8" stroke="#111" stroke-width="1.4"></path></svg>
<div style="left:21px;top:178px;width:72px;height:16px;background:#dfe6f6;border-bottom:1px solid #b8bccc;box-sizing:border-box"></div>
<div class="t" style="left: 23px; top: 180px; font-size: 11px; color: rgb(34, 34, 34); letter-spacing: -0.21px;">Traccia audi</div>
<svg style="position:absolute;left:79px;top:183px;" width="12" height="7" viewBox="0 0 12 7"><path d="M0.5 0.5 H11.5 L6 6.5 Z" fill="#111"></path></svg>
<div style="left:4px;top:195px;width:45px;height:16px;background:#dfe6f6;border-right:1px solid #b8bccc;border-bottom:1px solid #b8bccc;box-sizing:border-box"></div>
<div style="left:49px;top:195px;width:44px;height:16px;background:#dfe6f6;border-bottom:1px solid #b8bccc;box-sizing:border-box"></div>
<div class="t" style="left:4px;top:198px;width:45px;text-align:center;font-size:10px;color:#333">Muto</div>
<div class="t" style="left:49px;top:198px;width:44px;text-align:center;font-size:10px;color:#333">Solo</div>
<div class="t" style="left:14px;top:213px;font-size:8px;color:#333;font-weight:400;">–</div>
<div class="t" style="left:76px;top:214px;font-size:9px;color:#333;font-weight:700;">+</div>
<div style="left:14px;top:227px;width:71px;height:1.5px;background:#9c9ca2"></div>
<div style="left:14px;top:224px;width:1px;height:3px;background:#cacace"></div>
<div style="left:20px;top:224px;width:1px;height:3px;background:#cacace"></div>
<div style="left:26px;top:224px;width:1px;height:3px;background:#cacace"></div>
<div style="left:32px;top:224px;width:1px;height:3px;background:#cacace"></div>
<div style="left:37px;top:224px;width:1px;height:3px;background:#cacace"></div>
<div style="left:43px;top:224px;width:1px;height:3px;background:#cacace"></div>
<div style="left:49px;top:224px;width:1px;height:3px;background:#cacace"></div>
<div style="left:55px;top:224px;width:1px;height:3px;background:#cacace"></div>
<div style="left:61px;top:224px;width:1px;height:3px;background:#cacace"></div>
<div style="left:66px;top:224px;width:1px;height:3px;background:#cacace"></div>
<div style="left:72px;top:224px;width:1px;height:3px;background:#cacace"></div>
<div style="left:78px;top:224px;width:1px;height:3px;background:#cacace"></div>
<div style="left:84px;top:224px;width:1px;height:3px;background:#cacace"></div>
<svg style="position:absolute;left:43px;top:222.75px;" width="10" height="10" viewBox="0 0 10 10"><ellipse cx="5" cy="5" rx="4.5" ry="4.7" fill="#5656e0"></ellipse><ellipse cx="5" cy="5" rx="1.3" ry="1.8" fill="#a8a8f4"></ellipse></svg>
<div class="t" style="left:14px;top:241px;font-size:9.5px;color:#333;font-weight:400;">Sx</div>
<div class="t" style="left:70.5px;top:241px;font-size:9.5px;color:#333;font-weight:400;">Dx</div>
<div style="left:14px;top:256px;width:71px;height:1.5px;background:#9c9ca2"></div>
<div style="left:14px;top:253px;width:1px;height:3px;background:#cacace"></div>
<div style="left:20px;top:253px;width:1px;height:3px;background:#cacace"></div>
<div style="left:26px;top:253px;width:1px;height:3px;background:#cacace"></div>
<div style="left:32px;top:253px;width:1px;height:3px;background:#cacace"></div>
<div style="left:37px;top:253px;width:1px;height:3px;background:#cacace"></div>
<div style="left:43px;top:253px;width:1px;height:3px;background:#cacace"></div>
<div style="left:49px;top:253px;width:1px;height:3px;background:#cacace"></div>
<div style="left:55px;top:253px;width:1px;height:3px;background:#cacace"></div>
<div style="left:61px;top:253px;width:1px;height:3px;background:#cacace"></div>
<div style="left:66px;top:253px;width:1px;height:3px;background:#cacace"></div>
<div style="left:72px;top:253px;width:1px;height:3px;background:#cacace"></div>
<div style="left:78px;top:253px;width:1px;height:3px;background:#cacace"></div>
<div style="left:84px;top:253px;width:1px;height:3px;background:#cacace"></div>
<svg style="position:absolute;left:43px;top:251.75px;" width="10" height="10" viewBox="0 0 10 10"><ellipse cx="5" cy="5" rx="4.5" ry="4.7" fill="#5656e0"></ellipse><ellipse cx="5" cy="5" rx="1.3" ry="1.8" fill="#a8a8f4"></ellipse></svg>
<div class="t" style="left:7px;top:270.5px;font-size:10px;color:#222;font-weight:400;">Stereo, 44100Hz</div>
<div class="t" style="left:7px;top:282px;width:86px;overflow:hidden;white-space:nowrap;font-size:10px;color:#222">32-bit virgola mobile</div>
<div style="left:4px;top:436px;width:17px;height:17px;background:#dfe6f6;border-top:1px solid #f4f6fc;border-right:1px solid #c0c4d0;box-sizing:border-box"></div>
<svg style="position:absolute;left:7px;top:442.5px;" width="12" height="7" viewBox="0 0 12 7"><path d="M0.5 6.5 H11.5 L6 0.5 Z" fill="#111"></path></svg>
<div style="left:21px;top:436px;width:55px;height:17px;background:#dfe6f6;border-top:1px solid #f4f6fc;border-right:1px solid #8a8e9a;box-sizing:border-box"></div>
<div class="t" style="left: 29px; top: 438.5px; font-size: 11px; color: rgb(51, 51, 51); letter-spacing: -0.59px;">Seleziona</div>
<div style="left:94px;top:178px;width:28px;height:275px;background:#dbe4f7"></div>
<div style="left:94px;top:194px;width:28px;height:1px;background:#555"></div>
<div style="left:122px;top:178px;width:1px;height:275px;background:#222"></div>
<div class="t" style="left:86.5px;top:196.5px;width:30px;text-align:right;font-size:11px;color:#222;font-weight:700">1,0</div>
<div class="t" style="left:86.5px;top:221.3px;width:30px;text-align:right;font-size:11px;color:#222;font-weight:400">0,5</div>
<div style="left:119px;top:227px;width:4px;height:1px;background:#222"></div>
<div class="t" style="left:86.5px;top:252.8px;width:30px;text-align:right;font-size:11px;color:#222;font-weight:700">0,0</div>
<div style="left:117px;top:258px;width:6px;height:2px;background:#222"></div>
<div class="t" style="left:86.5px;top:284.3px;width:30px;text-align:right;font-size:11px;color:#222;font-weight:400">-0,5</div>
<div style="left:119px;top:290px;width:4px;height:1px;background:#222"></div>
<div class="t" style="left:86.5px;top:309px;width:30px;text-align:right;font-size:11px;color:#222;font-weight:700">-1,0</div>
<div style="left:94px;top:322px;width:28px;height:1px;background:#444"></div>
<div class="t" style="left:86.5px;top:325.5px;width:30px;text-align:right;font-size:11px;color:#222;font-weight:700">1,0</div>
<div class="t" style="left:86.5px;top:350.3px;width:30px;text-align:right;font-size:11px;color:#222;font-weight:400">0,5</div>
<div style="left:119px;top:356px;width:4px;height:1px;background:#222"></div>
<div class="t" style="left:86.5px;top:382.3px;width:30px;text-align:right;font-size:11px;color:#222;font-weight:700">0,0</div>
<div style="left:117px;top:387px;width:6px;height:2px;background:#222"></div>
<div class="t" style="left:86.5px;top:414.3px;width:30px;text-align:right;font-size:11px;color:#222;font-weight:400">-0,5</div>
<div style="left:119px;top:420px;width:4px;height:1px;background:#222"></div>
<div class="t" style="left:86.5px;top:439px;width:30px;text-align:right;font-size:11px;color:#222;font-weight:700">-1,0</div>
<div style="left:122px;top:179px;width:419px;height:274px;background:#c0c0c0;border-left:1.5px solid #222;border-top:1px solid #222;border-right:1px solid #222;border-top-left-radius:5px;border-top-right-radius:5px;box-sizing:border-box"></div>
<div style="left:124px;top:180px;width:416px;height:15px;background:#dcdcdc;border-top-left-radius:4px;border-top-right-radius:4px"></div>
<div style="left:124px;top:195px;width:218px;height:258px;background:#ebf1fd"></div>
<div class="t" style="left: 129px; top: 181px; font-size: 11.5px; color: rgb(34, 34, 34); letter-spacing: -0.01px;">Traccia audio n°1</div>
<div style="left:123px;top:322px;width:1135px;height:1.5px;background:#505050"></div>
<div style="left:123px;top:258px;width:417px;height:2px;background:#3a3aa8"></div>
<div style="left:123px;top:387px;width:417px;height:2px;background:#3a3aa8"></div>
<div style="left:4px;top:453px;width:1254px;height:6px;background:#6a6886"></div>
<div style="left:4px;top:453px;width:1254px;height:1.5px;background:#151520"></div>
<div style="left:4px;top:458px;width:1254px;height:1px;background:#151520"></div>
<div style="left:4px;top:459px;width:90px;height:170px;background:#f7f8fd"></div>
<div style="left:93px;top:459px;width:1px;height:170px;background:#333"></div>
<div style="left:4px;top:459px;width:17px;height:16px;background:#dfe6f6;border-right:1px solid #b8bccc;border-bottom:1px solid #b8bccc;box-sizing:border-box"></div>
<svg style="position:absolute;left:8px;top:463px;" width="9" height="9" viewBox="0 0 9 9"><path d="M1 1 L8 8 M8 1 L1 8" stroke="#111" stroke-width="1.4"></path></svg>
<div style="left:21px;top:459px;width:72px;height:16px;background:#dfe6f6;border-bottom:1px solid #b8bccc;box-sizing:border-box"></div>
<div class="t" style="left: 23px; top: 461px; font-size: 11px; color: rgb(34, 34, 34); letter-spacing: -0.21px;">Traccia audi</div>
<svg style="position:absolute;left:79px;top:464px;" width="12" height="7" viewBox="0 0 12 7"><path d="M0.5 0.5 H11.5 L6 6.5 Z" fill="#111"></path></svg>
<div style="left:4px;top:476px;width:45px;height:16px;background:#dfe6f6;border-right:1px solid #b8bccc;border-bottom:1px solid #b8bccc;box-sizing:border-box"></div>
<div style="left:49px;top:476px;width:44px;height:16px;background:#dfe6f6;border-bottom:1px solid #b8bccc;box-sizing:border-box"></div>
<div class="t" style="left:4px;top:479px;width:45px;text-align:center;font-size:10px;color:#333">Muto</div>
<div class="t" style="left:49px;top:479px;width:44px;text-align:center;font-size:10px;color:#333">Solo</div>
<div class="t" style="left:14px;top:494px;font-size:8px;color:#333;font-weight:400;">–</div>
<div class="t" style="left:76px;top:495px;font-size:9px;color:#333;font-weight:700;">+</div>
<div style="left:14px;top:508px;width:71px;height:1.5px;background:#9c9ca2"></div>
<div style="left:14px;top:505px;width:1px;height:3px;background:#cacace"></div>
<div style="left:20px;top:505px;width:1px;height:3px;background:#cacace"></div>
<div style="left:26px;top:505px;width:1px;height:3px;background:#cacace"></div>
<div style="left:32px;top:505px;width:1px;height:3px;background:#cacace"></div>
<div style="left:37px;top:505px;width:1px;height:3px;background:#cacace"></div>
<div style="left:43px;top:505px;width:1px;height:3px;background:#cacace"></div>
<div style="left:49px;top:505px;width:1px;height:3px;background:#cacace"></div>
<div style="left:55px;top:505px;width:1px;height:3px;background:#cacace"></div>
<div style="left:61px;top:505px;width:1px;height:3px;background:#cacace"></div>
<div style="left:66px;top:505px;width:1px;height:3px;background:#cacace"></div>
<div style="left:72px;top:505px;width:1px;height:3px;background:#cacace"></div>
<div style="left:78px;top:505px;width:1px;height:3px;background:#cacace"></div>
<div style="left:84px;top:505px;width:1px;height:3px;background:#cacace"></div>
<svg style="position:absolute;left:43px;top:503.75px;" width="10" height="10" viewBox="0 0 10 10"><ellipse cx="5" cy="5" rx="4.5" ry="4.7" fill="#5656e0"></ellipse><ellipse cx="5" cy="5" rx="1.3" ry="1.8" fill="#a8a8f4"></ellipse></svg>
<div class="t" style="left:14px;top:522px;font-size:9.5px;color:#333;font-weight:400;">Sx</div>
<div class="t" style="left:70.5px;top:522px;font-size:9.5px;color:#333;font-weight:400;">Dx</div>
<div style="left:14px;top:537px;width:71px;height:1.5px;background:#9c9ca2"></div>
<div style="left:14px;top:534px;width:1px;height:3px;background:#cacace"></div>
<div style="left:20px;top:534px;width:1px;height:3px;background:#cacace"></div>
<div style="left:26px;top:534px;width:1px;height:3px;background:#cacace"></div>
<div style="left:32px;top:534px;width:1px;height:3px;background:#cacace"></div>
<div style="left:37px;top:534px;width:1px;height:3px;background:#cacace"></div>
<div style="left:43px;top:534px;width:1px;height:3px;background:#cacace"></div>
<div style="left:49px;top:534px;width:1px;height:3px;background:#cacace"></div>
<div style="left:55px;top:534px;width:1px;height:3px;background:#cacace"></div>
<div style="left:61px;top:534px;width:1px;height:3px;background:#cacace"></div>
<div style="left:66px;top:534px;width:1px;height:3px;background:#cacace"></div>
<div style="left:72px;top:534px;width:1px;height:3px;background:#cacace"></div>
<div style="left:78px;top:534px;width:1px;height:3px;background:#cacace"></div>
<div style="left:84px;top:534px;width:1px;height:3px;background:#cacace"></div>
<svg style="position:absolute;left:43px;top:532.75px;" width="10" height="10" viewBox="0 0 10 10"><ellipse cx="5" cy="5" rx="4.5" ry="4.7" fill="#5656e0"></ellipse><ellipse cx="5" cy="5" rx="1.3" ry="1.8" fill="#a8a8f4"></ellipse></svg>
<div class="t" style="left:7px;top:551.5px;font-size:10px;color:#222;font-weight:400;">Stereo, 44100Hz</div>
<div class="t" style="left:7px;top:563px;width:86px;overflow:hidden;white-space:nowrap;font-size:10px;color:#222">32-bit virgola mobile</div>
<div style="left:94px;top:459px;width:28px;height:170px;background:#fafbfe"></div>
<div style="left:94px;top:475px;width:28px;height:1px;background:#555"></div>
<div style="left:122px;top:459px;width:1px;height:170px;background:#222"></div>
<div class="t" style="left:86.5px;top:477.5px;width:30px;text-align:right;font-size:11px;color:#222;font-weight:700">1,0</div>
<div class="t" style="left:86.5px;top:502.5px;width:30px;text-align:right;font-size:11px;color:#222;font-weight:400">0,5</div>
<div style="left:119px;top:508px;width:4px;height:1px;background:#222"></div>
<div class="t" style="left:86.5px;top:534px;width:30px;text-align:right;font-size:11px;color:#222;font-weight:700">0,0</div>
<div style="left:117px;top:539px;width:6px;height:2px;background:#222"></div>
<div class="t" style="left:86.5px;top:565.5px;width:30px;text-align:right;font-size:11px;color:#222;font-weight:400">-0,5</div>
<div style="left:119px;top:572px;width:4px;height:1px;background:#222"></div>
<div class="t" style="left:86.5px;top:590px;width:30px;text-align:right;font-size:11px;color:#222;font-weight:700">-1,0</div>
<div class="t" style="left:86.5px;top:606px;width:30px;text-align:right;font-size:11px;color:#222;font-weight:700">1,0</div>
<div style="left:93px;top:604px;width:1165px;height:1px;background:#444"></div>
<div style="left:470px;top:460px;width:36px;height:169px;background:#c2c2c2;border:1px solid #222;border-bottom:none;border-radius:6px 6px 0 0;box-sizing:border-box"></div>
<div style="left:471px;top:461px;width:34px;height:15px;background:#d8d8d8;border-radius:5px 5px 0 0"></div>
<div class="t" style="left:475.5px;top:462px;font-size:11px;color:#222;font-weight:400;">Tr...</div>
<div style="left:470px;top:539px;width:36px;height:2px;background:#3a3aa8"></div>
<div style="left:0px;top:629px;width:1280px;height:17px;background:#f0f0f0"></div>
<div style="left:142px;top:636px;width:1105px;height:2px;background:#8a8a8a"></div>
<div style="left:0px;top:645px;width:1280px;height:1px;background:#dcdde2"></div>
<div style="left:0px;top:646px;width:1280px;height:51px;background:#f8f9fd"></div>
<div style="left:3px;top:650.0px;width:4px;height:1px;background:#cfd1d8"></div>
<div style="left:3px;top:653.8px;width:4px;height:1px;background:#cfd1d8"></div>
<div style="left:3px;top:657.6px;width:4px;height:1px;background:#cfd1d8"></div>
<div style="left:3px;top:661.4px;width:4px;height:1px;background:#cfd1d8"></div>
<div style="left:3px;top:665.2px;width:4px;height:1px;background:#cfd1d8"></div>
<div style="left:3px;top:669.0px;width:4px;height:1px;background:#cfd1d8"></div>
<div style="left:3px;top:672.8px;width:4px;height:1px;background:#cfd1d8"></div>
<div style="left:3px;top:676.6px;width:4px;height:1px;background:#cfd1d8"></div>
<div style="left:3px;top:680.4px;width:4px;height:1px;background:#cfd1d8"></div>
<div style="left:3px;top:684.2px;width:4px;height:1px;background:#cfd1d8"></div>
<div style="left:3px;top:688.0px;width:4px;height:1px;background:#cfd1d8"></div>
<div style="left:3px;top:691.8px;width:4px;height:1px;background:#cfd1d8"></div>
<div style="left:8px;top:646px;width:1px;height:51px;background:#dfe0e5"></div>
<div class="t" style="left: 15px; top: 652px; font-size: 11.5px; color: rgb(34, 34, 34); letter-spacing: -0.14px;">Frequenza progetto (Hz)</div>
<div style="left:143px;top:651px;width:1px;height:16px;background:#c8c8cc"></div>
<div style="left:143px;top:677px;width:1px;height:16px;background:#c8c8cc"></div>
<div class="t" style="left: 150px; top: 652px; font-size: 11.5px; color: rgb(34, 34, 34); letter-spacing: -0.24px;">Ancora</div>
<div style="left:239px;top:651px;width:1px;height:16px;background:#c8c8cc"></div>
<div style="left:239px;top:677px;width:1px;height:16px;background:#c8c8cc"></div>
<div style="left:15px;top:672px;width:123px;height:22px;background:#fff;border:1px solid #7a7a7a;box-sizing:border-box;border-radius:2px"></div>
<div class="t" style="left: 19px; top: 676.8px; font-size: 11px; color: rgb(34, 34, 34); white-space: nowrap; overflow: hidden; letter-spacing: -0.32px;">44100</div>
<svg style="position:absolute;left:126px;top:680px;" width="9" height="6" viewBox="0 0 9 6"><path d="M0.8 0.8 L4.5 4.5 L8.2 0.8" stroke="#666" stroke-width="1" fill="none"></path></svg>
<div style="left:150px;top:672px;width:83px;height:22px;background:#fff;border:1px solid #e0e0e4;box-sizing:border-box;border-radius:2px"></div>
<div class="t" style="left: 154px; top: 676.8px; font-size: 11.5px; color: rgb(34, 34, 34); white-space: nowrap; overflow: hidden; letter-spacing: 0.02px;">Non attivo</div>
<svg style="position:absolute;left:221px;top:680px;" width="9" height="6" viewBox="0 0 9 6"><path d="M0.8 0.8 L4.5 4.5 L8.2 0.8" stroke="#666" stroke-width="1" fill="none"></path></svg>
<div style="left:246px;top:647px;width:297px;height:19px;background:#fff;border:1px solid #e0e0e4;box-sizing:border-box;border-radius:2px"></div>
<div class="t" style="left: 250px; top: 650.3px; font-size: 11.5px; color: rgb(34, 34, 34); white-space: nowrap; overflow: hidden; letter-spacing: -0.22px;">Inizio e fine della selezione</div>
<svg style="position:absolute;left:531px;top:653px;" width="9" height="6" viewBox="0 0 9 6"><path d="M0.8 0.8 L4.5 4.5 L8.2 0.8" stroke="#666" stroke-width="1" fill="none"></path></svg>
<div style="left:246px;top:672px;width:146px;height:20px;background:#c6c6ca;border-top:1.5px solid #7a7a7e;border-left:1.5px solid #8a8a8e;box-sizing:border-box"></div>
<div style="left:248.0px;top:674px;width:10.7px;height:17px;background:#d2d2d4"></div>
<div style="left:258.7px;top:674px;width:10.8px;height:17px;background:#d2d2d4"></div>
<div style="left:269.5px;top:674px;width:11.5px;height:17px;background:#bcbcc2"></div>
<div style="left:281.0px;top:674px;width:10.8px;height:17px;background:#d2d2d4"></div>
<div style="left:291.8px;top:674px;width:11.4px;height:17px;background:#d2d2d4"></div>
<div style="left:303.2px;top:674px;width:13.4px;height:17px;background:#bcbcc2"></div>
<div style="left:316.6px;top:674px;width:12.1px;height:17px;background:#d2d2d4"></div>
<div style="left:328.7px;top:674px;width:8.5px;height:17px;background:#d2d2d4"></div>
<div style="left:337.2px;top:674px;width:6.4px;height:17px;background:#d2d2d4"></div>
<div style="left:343.6px;top:674px;width:8.2px;height:17px;background:#d2d2d4"></div>
<div style="left:351.8px;top:674px;width:10.4px;height:17px;background:#d2d2d4"></div>
<div style="left:362.2px;top:674px;width:10.8px;height:17px;background:#d2d2d4"></div>
<div style="left:373.0px;top:674px;width:10.0px;height:17px;background:#bcbcc2"></div>
<div class="t" style="left:243.5px;top:674.5px;width:20px;text-align:center;font-size:12.5px;color:#20209a">0</div>
<div class="t" style="left:253.89999999999998px;top:674.5px;width:20px;text-align:center;font-size:12.5px;color:#20209a">0</div>
<div class="t" style="left:265.2px;top:674.5px;width:20px;text-align:center;font-size:12.5px;color:#20209a">h</div>
<div class="t" style="left:276.8px;top:674.5px;width:20px;text-align:center;font-size:12.5px;color:#20209a">0</div>
<div class="t" style="left:286.7px;top:674.5px;width:20px;text-align:center;font-size:12.5px;color:#20209a">0</div>
<div class="t" style="left:299.7px;top:674.5px;width:20px;text-align:center;font-size:12.5px;color:#20209a">m</div>
<div class="t" style="left:313.5px;top:674.5px;width:20px;text-align:center;font-size:12.5px;color:#20209a">0</div>
<div class="t" style="left:323.9px;top:674.5px;width:20px;text-align:center;font-size:12.5px;color:#20209a">0</div>
<div class="t" style="left:330.5px;top:674.5px;width:20px;text-align:center;font-size:12.5px;color:#20209a">.</div>
<div class="t" style="left:336.8px;top:674.5px;width:20px;text-align:center;font-size:12.5px;color:#20209a">0</div>
<div class="t" style="left:346.8px;top:674.5px;width:20px;text-align:center;font-size:12.5px;color:#20209a">0</div>
<div class="t" style="left:357.7px;top:674.5px;width:20px;text-align:center;font-size:12.5px;color:#20209a">0</div>
<div class="t" style="left:368.3px;top:674.5px;width:20px;text-align:center;font-size:12.5px;color:#20209a">s</div>
<div style="left:383px;top:674px;width:9px;height:17px;background:#c0c0c4;border-left:1px solid #dcdce0;box-sizing:border-box"></div>
<svg style="position:absolute;left:385px;top:679px;" width="7" height="5" viewBox="0 0 7 5"><path d="M0.5 0.5 H6.5 L3.5 4.5 Z" fill="#111"></path></svg>
<div style="left:397px;top:672px;width:146px;height:20px;background:#c6c6ca;border-top:1.5px solid #7a7a7e;border-left:1.5px solid #8a8a8e;box-sizing:border-box"></div>
<div style="left:399.0px;top:674px;width:11.1px;height:17px;background:#d2d2d4"></div>
<div style="left:410.1px;top:674px;width:10.9px;height:17px;background:#d2d2d4"></div>
<div style="left:420.9px;top:674px;width:11.5px;height:17px;background:#bcbcc2"></div>
<div style="left:432.4px;top:674px;width:10.8px;height:17px;background:#d2d2d4"></div>
<div style="left:443.2px;top:674px;width:11.4px;height:17px;background:#d2d2d4"></div>
<div style="left:454.6px;top:674px;width:13.4px;height:17px;background:#bcbcc2"></div>
<div style="left:468.0px;top:674px;width:12.1px;height:17px;background:#d2d2d4"></div>
<div style="left:480.1px;top:674px;width:8.5px;height:17px;background:#d2d2d4"></div>
<div style="left:488.6px;top:674px;width:6.5px;height:17px;background:#d2d2d4"></div>
<div style="left:495.1px;top:674px;width:8.2px;height:17px;background:#d2d2d4"></div>
<div style="left:503.2px;top:674px;width:10.5px;height:17px;background:#d2d2d4"></div>
<div style="left:513.7px;top:674px;width:10.8px;height:17px;background:#d2d2d4"></div>
<div style="left:524.4px;top:674px;width:9.6px;height:17px;background:#bcbcc2"></div>
<div class="t" style="left:394.9px;top:674.5px;width:20px;text-align:center;font-size:12.5px;color:#20209a">0</div>
<div class="t" style="left:405.29999999999995px;top:674.5px;width:20px;text-align:center;font-size:12.5px;color:#20209a">0</div>
<div class="t" style="left:416.6px;top:674.5px;width:20px;text-align:center;font-size:12.5px;color:#20209a">h</div>
<div class="t" style="left:428.20000000000005px;top:674.5px;width:20px;text-align:center;font-size:12.5px;color:#20209a">0</div>
<div class="t" style="left:438.1px;top:674.5px;width:20px;text-align:center;font-size:12.5px;color:#20209a">0</div>
<div class="t" style="left:451.1px;top:674.5px;width:20px;text-align:center;font-size:12.5px;color:#20209a">m</div>
<div class="t" style="left:464.9px;top:674.5px;width:20px;text-align:center;font-size:12.5px;color:#20209a">0</div>
<div class="t" style="left:475.29999999999995px;top:674.5px;width:20px;text-align:center;font-size:12.5px;color:#20209a">2</div>
<div class="t" style="left:481.9px;top:674.5px;width:20px;text-align:center;font-size:12.5px;color:#20209a">.</div>
<div class="t" style="left:488.20000000000005px;top:674.5px;width:20px;text-align:center;font-size:12.5px;color:#20209a">7</div>
<div class="t" style="left:498.20000000000005px;top:674.5px;width:20px;text-align:center;font-size:12.5px;color:#20209a">2</div>
<div class="t" style="left:509.1px;top:674.5px;width:20px;text-align:center;font-size:12.5px;color:#20209a">8</div>
<div class="t" style="left:519.7px;top:674.5px;width:20px;text-align:center;font-size:12.5px;color:#20209a">s</div>
<div style="left:534px;top:674px;width:9px;height:17px;background:#c0c0c4;border-left:1px solid #dcdce0;box-sizing:border-box"></div>
<svg style="position:absolute;left:536px;top:679px;" width="7" height="5" viewBox="0 0 7 5"><path d="M0.5 0.5 H6.5 L3.5 4.5 Z" fill="#111"></path></svg>
<div style="left:549px;top:646px;width:1px;height:51px;background:#d2d4da"></div>
<div style="left:554px;top:650.0px;width:4px;height:1px;background:#cfd1d8"></div>
<div style="left:554px;top:653.8px;width:4px;height:1px;background:#cfd1d8"></div>
<div style="left:554px;top:657.6px;width:4px;height:1px;background:#cfd1d8"></div>
<div style="left:554px;top:661.4px;width:4px;height:1px;background:#cfd1d8"></div>
<div style="left:554px;top:665.2px;width:4px;height:1px;background:#cfd1d8"></div>
<div style="left:554px;top:669.0px;width:4px;height:1px;background:#cfd1d8"></div>
<div style="left:554px;top:672.8px;width:4px;height:1px;background:#cfd1d8"></div>
<div style="left:554px;top:676.6px;width:4px;height:1px;background:#cfd1d8"></div>
<div style="left:554px;top:680.4px;width:4px;height:1px;background:#cfd1d8"></div>
<div style="left:554px;top:684.2px;width:4px;height:1px;background:#cfd1d8"></div>
<div style="left:554px;top:688.0px;width:4px;height:1px;background:#cfd1d8"></div>
<div style="left:554px;top:691.8px;width:4px;height:1px;background:#cfd1d8"></div>
<div style="left:559px;top:646px;width:1px;height:51px;background:#dfe0e5"></div>
<div style="left:561px;top:653px;width:210px;height:35px;background:#c6c6ca;border-top:2px solid #727276;border-left:1.5px solid #8a8a8e;box-sizing:border-box"></div>
<div style="left:563px;top:655px;width:39px;height:33px;background:#d2d2d4"></div>
<div style="left:602px;top:655px;width:28px;height:33px;background:#bcbcc2"></div>
<div style="left:630px;top:655px;width:38px;height:33px;background:#d2d2d4"></div>
<div style="left:668px;top:655px;width:35px;height:33px;background:#bcbcc2"></div>
<div style="left:703px;top:655px;width:39px;height:33px;background:#d2d2d4"></div>
<div style="left:742px;top:655px;width:20px;height:33px;background:#bcbcc2"></div>
<div class="t" style="left:557.6px;top:657px;width:30px;text-align:center;font-size:27px;line-height:33px;color:#16168c;-webkit-text-stroke:0.5px #16168c">0</div>
<div class="t" style="left:576.5px;top:657px;width:30px;text-align:center;font-size:27px;line-height:33px;color:#16168c;-webkit-text-stroke:0.5px #16168c">0</div>
<div class="t" style="left:600.5px;top:657px;width:30px;text-align:center;font-size:27px;line-height:33px;color:#16168c;-webkit-text-stroke:0.5px #16168c">h</div>
<div class="t" style="left:624.8px;top:657px;width:30px;text-align:center;font-size:27px;line-height:33px;color:#16168c;-webkit-text-stroke:0.5px #16168c">0</div>
<div class="t" style="left:643px;top:657px;width:30px;text-align:center;font-size:27px;line-height:33px;color:#16168c;-webkit-text-stroke:0.5px #16168c">0</div>
<div class="t" style="left:670.7px;top:657px;width:30px;text-align:center;font-size:27px;line-height:33px;color:#16168c;-webkit-text-stroke:0.5px #16168c">m</div>
<div class="t" style="left:697.5px;top:657px;width:30px;text-align:center;font-size:27px;line-height:33px;color:#16168c;-webkit-text-stroke:0.5px #16168c">0</div>
<div class="t" style="left:716.4px;top:657px;width:30px;text-align:center;font-size:27px;line-height:33px;color:#16168c;-webkit-text-stroke:0.5px #16168c">0</div>
<div class="t" style="left:739.6px;top:657px;width:30px;text-align:center;font-size:27px;line-height:33px;color:#16168c;-webkit-text-stroke:0.5px #16168c">s</div>
<div style="left:762px;top:655px;width:9px;height:33px;background:#c4c4c8;border-left:1px solid #dcdce0;box-sizing:border-box"></div>
<svg style="position:absolute;left:763px;top:669px;" width="7" height="5" viewBox="0 0 7 5"><path d="M0.5 0.5 H6.5 L3.5 4.5 Z" fill="#111"></path></svg>
<div style="left:780px;top:646px;width:1px;height:51px;background:#d2d4da"></div>
<div style="left:783px;top:646px;width:1px;height:51px;background:#d2d4da"></div>
<div style="left:0px;top:697px;width:1280px;height:1px;background:#dcdde2"></div>
<div style="left:0px;top:698px;width:1280px;height:20px;background:#f0f0f0"></div>
<div class="t" style="left: 12px; top: 704px; font-size: 11.5px; color: rgb(34, 34, 34); letter-spacing: -0.19px;">Arrestato.</div>
<div style="left:220px;top:700px;width:1px;height:17px;background:#d8d8d8"></div>
<div style="left:1112px;top:700px;width:1px;height:17px;background:#d8d8d8"></div>
<div style="left:0px;top:717px;width:1280px;height:3px;background:#202020"></div>
<div style="left:440px;top:256px;width:399px;height:202px;border-radius:8px;box-shadow:0 16px 48px rgba(0,0,0,0.34), 0 3px 10px rgba(0,0,0,0.22), 0 0 2px rgba(0,0,0,0.3)"></div>
<div style="left:440px;top:256px;width:399px;height:202px;border-radius:8px;background:#f0f0f0;overflow:hidden">
<div style="left:0px;top:0px;width:399px;height:28px;background:#ffffff"></div>
<div class="t" style="left: 8px; top: 7px; font-size: 12px; color: rgb(26, 26, 26); letter-spacing: -0.19px;">Amplifica</div>
<div style="left:287px;top:13px;width:10px;height:1px;background:#222"></div>
<svg style="position:absolute;left:330px;top:8px;" width="10" height="10" viewBox="0 0 10 10"><rect x="0.5" y="0.5" width="9" height="9" rx="1.5" fill="none" stroke="#222" stroke-width="1"></rect></svg>
<svg style="position:absolute;left:373px;top:8px;" width="10" height="10" viewBox="0 0 10 10"><path d="M0.5 0.5 L9.5 9.5 M9.5 0.5 L0.5 9.5" stroke="#222" stroke-width="1.1"></path></svg>
<div class="t" style="left: 111px; top: 41px; font-size: 11.5px; color: rgb(34, 34, 34); letter-spacing: -0.11px;">Amplificazione (dB):</div>
<div style="left:220px;top:38px;width:68px;height:20px;background:#fff;border-bottom:2px solid #205c94;box-sizing:border-box"></div>
<div style="left:225px;top:42px;width:32px;height:14px;background:#0078d7"></div>
<div class="t" style="left: 226px; top: 42px; font-size: 11.5px; color: rgb(255, 255, 255); letter-spacing: -0.7px;">41,031</div>
<div style="left:12px;top:78px;width:375px;height:3px;background:#d8d8d8;border-radius:2px"></div>
<svg style="position:absolute;left:344px;top:71px;" width="11" height="19" viewBox="0 0 11 19"><path d="M0.5 2 Q0.5 0.5 2 0.5 H9 Q10.5 0.5 10.5 2 V13 L5.5 18 L0.5 13 Z" fill="#0067c0"></path></svg>
<div class="t" style="left: 91px; top: 101px; font-size: 11.5px; color: rgb(34, 34, 34); letter-spacing: -0.22px;">Nuovo picco ampiezza (dB):</div>
<div style="left:240px;top:99px;width:66px;height:20px;background:#fff;border-bottom:1px solid #888;box-sizing:border-box"></div>
<div class="t" style="left:245px;top:101px;font-size:11.5px;color:#222">0,0</div>
<div style="left:141px;top:134px;width:12px;height:12px;background:#fff;border:1px solid #555;border-radius:2px;box-sizing:border-box"></div>
<div class="t" style="left: 157px; top: 133px; font-size: 11.5px; color: rgb(34, 34, 34); letter-spacing: -0.04px;">Consenti il clipping</div>
<div style="left:13px;top:168px;width:68px;height:18px;background:#fdfdfd;border:1px solid #d0d0d0;border-radius:3px;box-sizing:border-box"></div>
<div class="t" style="left: 13px; top: 171px; font-size: 11.5px; color: rgb(34, 34, 34); width: 68px; text-align: center; letter-spacing: -0.61px;">Gestisci</div>
<div style="left:88px;top:168px;width:69px;height:18px;background:#fdfdfd;border:1px solid #d0d0d0;border-radius:3px;box-sizing:border-box"></div>
<div class="t" style="left: 88px; top: 171px; font-size: 11.5px; color: rgb(34, 34, 34); width: 69px; text-align: center; letter-spacing: -0.27px;">Anteprima</div>
<div style="left:205px;top:168px;width:69px;height:18px;background:#fdfdfd;border:1px solid #7a9cc0;border-radius:3px;box-sizing:border-box"></div>
<div class="t" style="left: 205px; top: 171px; font-size: 11.5px; color: rgb(34, 34, 34); width: 69px; text-align: center; letter-spacing: -1.31px;">OK</div>
<div style="left:283px;top:168px;width:67px;height:18px;background:#fdfdfd;border:1px solid #d0d0d0;border-radius:3px;box-sizing:border-box"></div>
<div class="t" style="left: 283px; top: 171px; font-size: 11.5px; color: rgb(34, 34, 34); width: 67px; text-align: center; letter-spacing: -0.2px;">Annulla</div>
<div style="left:362px;top:165px;width:23px;height:24px;background:#fff;border:1px solid #e0e0e0;box-sizing:border-box"></div>
<svg style="position:absolute;left:364px;top:167px;" width="19" height="19" viewBox="0 0 19 19"><circle cx="9.5" cy="9.5" r="9" fill="#5b8fe8"></circle><text x="9.5" y="14.5" text-anchor="middle" font-family="Liberation Sans" font-weight="700" font-size="14" fill="#fff">?</text></svg>
</div>
</body></html>
